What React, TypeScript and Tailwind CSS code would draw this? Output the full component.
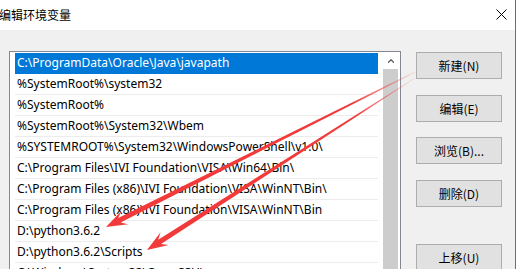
import { ChevronUp } from 'lucide-react'

const paths = [
  'C:\\ProgramData\\Oracle\\Java\\javapath',
  '%SystemRoot%\\system32',
  '%SystemRoot%',
  '%SystemRoot%\\System32\\Wbem',
  '%SYSTEMROOT%\\System32\\WindowsPowerShell\\v1.0\\',
  'C:\\Program Files\\IVI Foundation\\VISA\\Win64\\Bin\\',
  'C:\\Program Files (x86)\\IVI Foundation\\VISA\\WinNT\\Bin\\',
  'C:\\Program Files (x86)\\IVI Foundation\\VISA\\WinNT\\Bin',
  'D:\\python3.6.2',
  'D:\\python3.6.2\\Scripts',
  'C:\\Windows\\System32\\OpenSSH\\',
  'C:\\Program Files\\Git\\cmd',
]

const buttons = [
  { label: '新建(N)', mt: 'mt-[22px]' },
  { label: '编辑(E)', mt: 'mt-[16px]' },
  { label: '浏览(B)...', mt: 'mt-[15px]' },
  { label: '删除(D)', mt: 'mt-[16px]' },
  { label: '上移(U)', mt: 'mt-[37px]' },
]

// tapered arrow outline, thin at the start and wide near the head
function arrowPoints(sx: number, sy: number, tx: number, ty: number) {
  const dx = tx - sx, dy = ty - sy
  const len = Math.hypot(dx, dy)
  const ux = dx / len, uy = dy / len
  const nx = -uy, ny = ux
  const headLen = 21, headW = 7.5, neck = 15, w0 = 0.4, w1 = 2.6
  const p = (d: number, w: number) =>
    `${(tx - ux * d + nx * w).toFixed(1)},${(ty - uy * d + ny * w).toFixed(1)}`
  return [
    `${(sx + nx * w0).toFixed(1)},${(sy + ny * w0).toFixed(1)}`,
    p(neck, w1), p(headLen, headW), p(0, 0), p(headLen, -headW), p(neck, -w1),
    `${(sx - nx * w0).toFixed(1)},${(sy - ny * w0).toFixed(1)}`,
  ].join(' ')
}

const arrows = [
  { id: 'a1', sx: 415, sy: 72, tx: 106, ty: 227 },
  { id: 'a2', sx: 415, sy: 78, tx: 147, ty: 250 },
]

function Arrows() {
  return (
    <svg className="pointer-events-none absolute left-0 top-0" width={517} height={269}>
      <defs>
        {arrows.map((a) => {
          const len = Math.hypot(a.tx - a.sx, a.ty - a.sy)
          const ex = a.sx + ((a.tx - a.sx) / len) * 70
          const ey = a.sy + ((a.ty - a.sy) / len) * 70
          return (
            <linearGradient key={a.id} id={a.id} gradientUnits="userSpaceOnUse" x1={a.sx} y1={a.sy} x2={ex} y2={ey}>
              <stop offset="0" stopColor="#f23a3a" stopOpacity="0.1" />
              <stop offset="1" stopColor="#f23a3a" stopOpacity="1" />
            </linearGradient>
          )
        })}
      </defs>
      {arrows.map((a) => (
        <polygon key={a.id} points={arrowPoints(a.sx, a.sy, a.tx, a.ty)} fill={`url(#${a.id})`} />
      ))}
    </svg>
  )
}

export default function App() {
  return (
    <div className="relative flex h-[269px] w-[517px] overflow-hidden bg-white font-['Noto_Sans','Noto_Sans_CJK_SC',sans-serif] text-[12px] text-black">
      <div className="flex w-[515px] flex-col">
        {/* title bar */}
        <div className="flex h-[30px] shrink-0 items-center justify-between bg-white pr-[8px]">
          <span className="ml-[-1px] font-['Noto_Sans_CJK_SC',sans-serif] text-[12px] leading-none">编辑环境变量</span>
          <svg width="11" height="11" viewBox="0 0 11 11" className="mt-[-1px]">
            <path d="M0.5 0.5 L10.5 10.5 M10.5 0.5 L0.5 10.5" stroke="#000" strokeWidth="1" />
          </svg>
        </div>

        <div className="flex flex-1 bg-[#f0f0f0]">
          {/* path list */}
          <div className="ml-[9px] mt-[21px] flex h-[300px] w-[392px] shrink-0 border border-[#828790] bg-white">
            <div className="w-[368px] shrink-0 pl-[5px] pt-[1px]">
              {paths.map((p, i) => (
                <div key={p}
                  className={i === 0
                    ? 'flex h-[21px] items-center whitespace-nowrap border-b border-[#0078d7] bg-[#0078d7] pl-[2px] text-white'
                    : 'flex h-[21px] items-center whitespace-nowrap border-b border-[#ececec] pl-[2px]'}>
                  {p}
                </div>
              ))}
            </div>
            <div className="ml-[5px] flex w-[17px] shrink-0 flex-col">
              <div className="flex h-[17px] items-center justify-center pr-[2px]">
                <ChevronUp className="h-[10px] w-[10px] text-[#606060]" strokeWidth={3} />
              </div>
              <div className="mr-[2px] flex-1 bg-[#cdcdcd]" />
            </div>
          </div>

          {/* buttons */}
          <div className="ml-[15px] flex flex-col">
            {buttons.map((b) => (
              <div key={b.label}
                className={`${b.mt} flex h-[27px] w-[86px] shrink-0 items-center justify-center border border-[#adadad] bg-[#e1e1e1] font-['Noto_Sans_CJK_SC',sans-serif]`}>
                {b.label}
              </div>
            ))}
          </div>
        </div>
      </div>
      <div className="w-px bg-[#1883d7]" />
      <div className="w-px bg-white" />

      <Arrows />
    </div>
  )
}
